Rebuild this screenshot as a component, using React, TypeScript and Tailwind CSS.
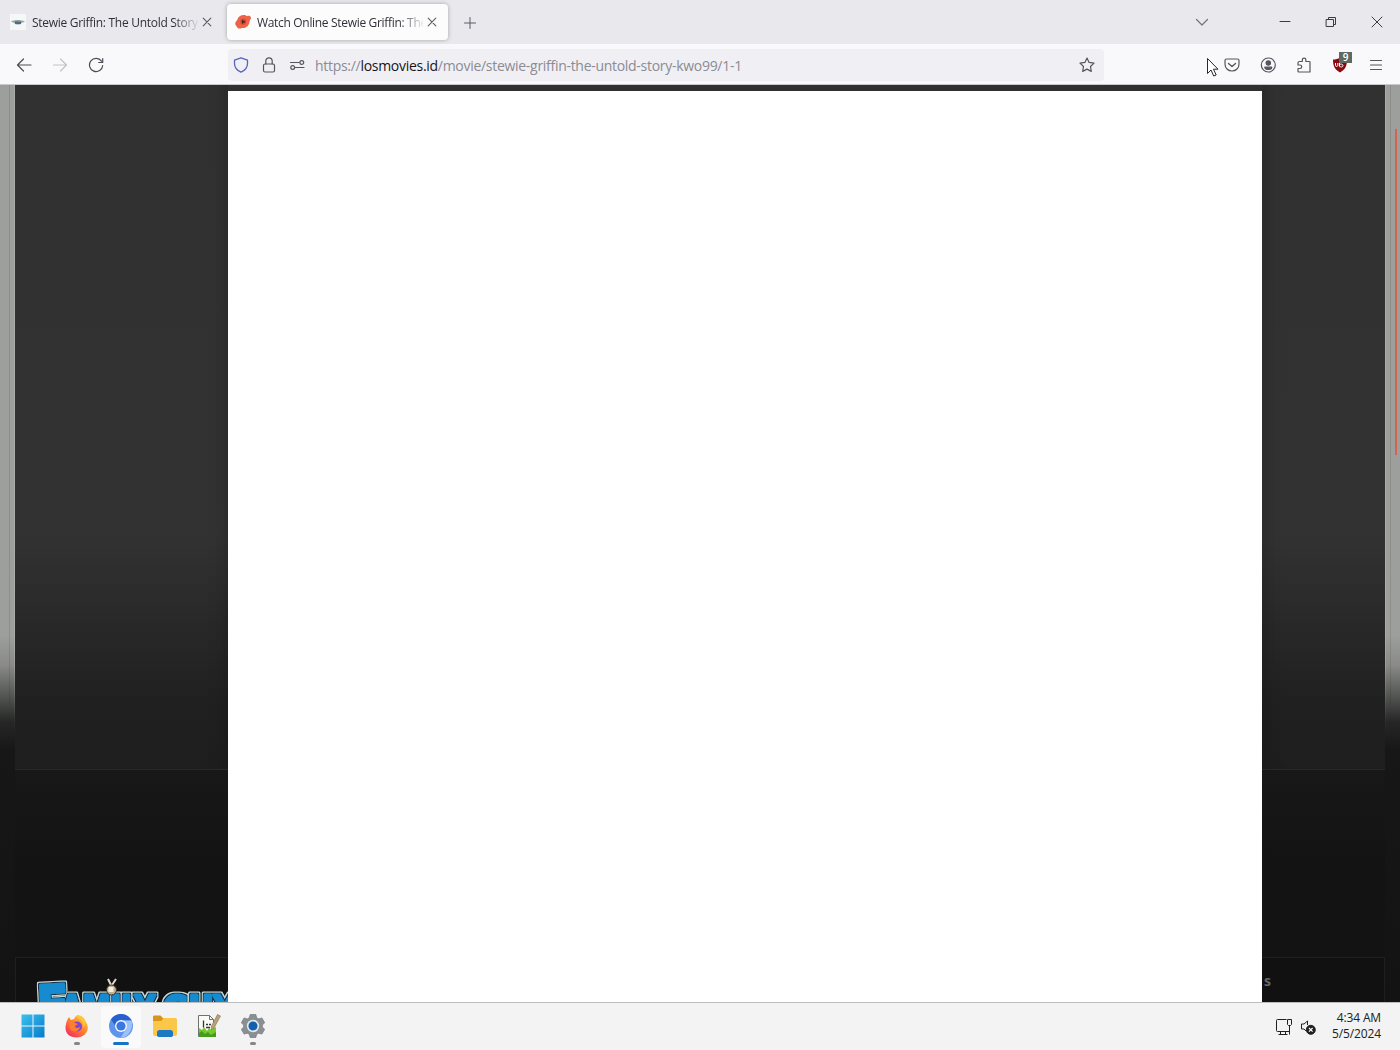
import type { ReactNode } from "react";

const TABS = [
  { title: "Stewie Griffin: The Untold Story", active: false },
  { title: "Watch Online Stewie Griffin: The", active: true },
];

function Stroke({ children, className = "" }: { children: ReactNode; className?: string }) {
  return (
    <svg
      width="16"
      height="16"
      viewBox="0 0 16 16"
      fill="none"
      stroke="currentColor"
      strokeWidth="1.2"
      strokeLinecap="round"
      strokeLinejoin="round"
      className={`shrink-0 ${className}`}
    >
      {children}
    </svg>
  );
}

function CloseIcon() {
  return (
    <Stroke className="text-[#5b5b66]">
      <path d="M4.200 4.200l7.600 7.600M11.800 4.200l-7.600 7.600" strokeWidth="1.100" />
    </Stroke>
  );
}

function UfoFavicon() {
  return (
    <svg width="16" height="16" viewBox="0 0 16 16" className="shrink-0">
      <rect width="16" height="16" fill="#f6f8f8" />
      <path d="M1 7.500c3-2 10-2 14 0-2 1.500-4 1-5 3H6C5 8.500 3 9 1 7.500z" fill="#91a9ae" />
      <path d="M5 7.500h6v2.500H5z" fill="#576a70" />
    </svg>
  );
}

function PlayFavicon() {
  return (
    <svg width="16" height="16" viewBox="0 0 16 16" className="shrink-0">
      <path d="M3 4C5 .5 10 .2 12 2.200c1.500-.8 3.500-.2 4 1.300 0 2-1.300 2.500-1.500 4.500-.5 4-4 6.500-7.500 6-1.500 1-4.500.8-5-1C1 11.500.2 11 .2 9.500.2 7.500 2.500 6.500 3 4z" fill="#ee6248" />
      <circle cx="8.200" cy="7.800" r="3" fill="#cf4935" />
      <path d="M7 5.800l3.500 2L7 9.800z" fill="#4c2420" />
    </svg>
  );
}

function Tab({ title, active }: { title: string; active: boolean }) {
  return (
    <div
      className={`flex h-9 w-[221px] items-center pl-2 pr-2 ${
        active ? "rounded bg-[#fcfcfd] shadow-[0_0_4px_rgba(0,0,0,0.3)]" : ""
      }`}
    >
      {active ? <PlayFavicon /> : <UfoFavicon />}
      <span
        className={`ml-1.5 w-[166px] overflow-hidden whitespace-nowrap pt-0.5 text-[12px] leading-4 text-[#303038] [mask-image:linear-gradient(to_right,black_142px,transparent_168px)] ${
          active ? "tracking-[-0.32px]" : "tracking-[-0.29px]"
        }`}
      >
        {title}
      </span>
      <span className="ml-auto">
        <CloseIcon />
      </span>
    </div>
  );
}

function TabBar() {
  return (
    <div className="flex h-11 items-center bg-[#e9e8ed]">
      <div className="flex gap-1 pl-0.5">
        {TABS.map((tab) => (
          <Tab key={tab.title} {...tab} />
        ))}
      </div>
      <Stroke className="ml-3.5 mt-0.5 text-[#5b5b66]">
        <path d="M8 2.500v11M2.500 8h11" strokeWidth="1" />
      </Stroke>
      <div className="ml-auto flex items-center pr-[15px] text-[#3b3b42]">
        <Stroke className="mr-[67px] text-[#73737c]">
          <path d="M2.500 5.500L8 11l5.500-5.500" />
        </Stroke>
        <Stroke className="mr-[30px]">
          <path d="M3 7.500h10" strokeWidth="1" />
        </Stroke>
        <Stroke className="mr-[30px]">
          <path d="M3.500 5.500h7v7h-7zM5.500 5.500v-2h7v7h-2" strokeWidth="1" />
        </Stroke>
        <Stroke>
          <path d="M3 3l10 10M13 3L3 13" strokeWidth="1" />
        </Stroke>
      </div>
    </div>
  );
}

function UblockIcon() {
  return (
    <div className="relative h-4 w-4">
      <svg width="16" height="16" viewBox="0 0 16 16">
        <path d="M8 .5c2 1.500 4.500 2 7 2 0 6-1.500 10-7 13-5.500-3-7-7-7-13 2.500 0 5-.5 7-2z" fill="#8b0a12" />
        <path d="M3.500 6v2.500c0 1.200 2.300 1.200 2.300 0V6M7.500 4.500v5M7.500 8c1-1.500 3.500-1 3.500.6S8.500 10.500 7.500 9" fill="none" stroke="#fff" strokeWidth="1" />
      </svg>
      <span className="absolute -right-[4px] -top-[5px] flex h-[11px] w-[13px] items-center justify-center bg-[#5f6964] text-[10px] font-semibold leading-none text-white">
        9
      </span>
    </div>
  );
}

function Toolbar() {
  return (
    <div className="flex h-[41px] items-center border-b border-[#c9c9cd] bg-[#f9f9fb] pt-px text-[#55555e]">
      <div className="flex w-[228px] items-center gap-5 pl-4">
        <Stroke className="text-[#4c4c55]">
          <path d="M15 8H1.500M7.500 2L1.500 8l6 6" />
        </Stroke>
        <Stroke className="text-[#c3c3c8]">
          <path d="M1.500 8h13M8.500 2l6 6-6 6" />
        </Stroke>
        <Stroke className="text-[#4c4c55]">
          <path d="M13.500 4.200A6.600 6.600 0 1 0 14.700 8.500M14.700 1.500v4h-4" />
        </Stroke>
      </div>
      <div className="flex h-8 w-[876px] items-center rounded bg-[#f0f0f4] pl-[5px] pr-[9px]">
        <Stroke className="text-[#5964bb]">
          <path d="M8 .8l6.500 2.400v3.300c0 4-2.500 7-6.500 8.700-4-1.700-6.500-4.700-6.500-8.700V3.200z" strokeWidth="1.300" />
        </Stroke>
        <Stroke className="ml-3">
          <rect x="2.500" y="7" width="11" height="8" rx="1.500" />
          <path d="M4.800 7V4a3.200 3.200 0 0 1 6.400 0v3" />
        </Stroke>
        <Stroke className="ml-3">
          <path d="M1.500 5.500H10M6.500 10.500H15" />
          <circle cx="12.800" cy="5.500" r="1.900" />
          <circle cx="3.700" cy="10.500" r="1.900" />
        </Stroke>
        <span className="ml-2.5 whitespace-nowrap pt-0.5 text-[14px] leading-5 tracking-[-0.29px] text-[#8b8b93]">
          https://<span className="text-[#15141a]">losmovies.id</span>/movie/stewie-griffin-the-untold-story-kwo99/1-1
        </span>
        <Stroke className="ml-auto">
          <path d="M8 1l2.100 4.400 4.900.7-3.500 3.400.8 4.900L8 12.100l-4.300 2.300.8-4.900L1 6.100l4.900-.7z" />
        </Stroke>
      </div>
      <div className="ml-auto flex items-center gap-5 pr-4">
        <Stroke>
          <path d="M1 3.500C1 2.500 1.700 2 2.500 2h11c.8 0 1.500.5 1.500 1.500V7c0 4-3 7-7 7S1 11 1 7z" />
          <path d="M4.500 6.500L8 9.500l3.500-3" strokeWidth="1.400" />
        </Stroke>
        <Stroke>
          <circle cx="8.300" cy="8" r="7" />
          <circle cx="8.300" cy="6" r="2.200" fill="currentColor" />
          <path d="M4.800 10.200h7c0 3-7 3-7 0z" fill="currentColor" />
        </Stroke>
        <Stroke>
          <path d="M2 6c0-1 .5-1.500 1.500-1.500h2.800V3a1.800 1.800 0 0 1 3.600 0v1.500h3.300c.6 0 .8.4.8.800V15H3c-.7 0-1-.4-1-1v-2.500h2a1.700 1.700 0 0 0 0-3.500H2z" />
        </Stroke>
        <UblockIcon />
        <Stroke>
          <path d="M2.500 3.500h11M2.500 8h11M2.500 12.500h11" />
        </Stroke>
      </div>
    </div>
  );
}

function FamilyGuyLogo() {
  return (
    <svg width="192" height="26" viewBox="36 976 192 26" className="block overflow-hidden">
      <defs>
        <filter id="outline" x="-10%" y="-20%" width="120%" height="140%">
          <feMorphology in="SourceAlpha" operator="dilate" radius="2" result="outer" />
          <feFlood floodColor="#c5dcd9" />
          <feComposite in2="outer" operator="in" result="pale" />
          <feMorphology in="SourceAlpha" operator="dilate" radius="1" result="inner" />
          <feFlood floodColor="#122c42" />
          <feComposite in2="inner" operator="in" result="dark" />
          <feMerge>
            <feMergeNode in="pale" />
            <feMergeNode in="dark" />
            <feMergeNode in="SourceGraphic" />
          </feMerge>
        </filter>
      </defs>
      <g
        fontFamily="'DejaVu Sans', sans-serif"
        fontWeight="bold"
        fill="#178bd0"
        stroke="#178bd0"
        strokeWidth="3"
        strokeLinejoin="round"
        filter="url(#outline)"
      >
        <text x="36" y="1026" fontSize="56" textLength="32" lengthAdjust="spacingAndGlyphs" transform="rotate(-3 40 990)">F</text>
        <text x="61" y="1021" fontSize="36" textLength="94" lengthAdjust="spacingAndGlyphs">AMILY</text>
        <text x="163" y="1021" fontSize="36" textLength="73" lengthAdjust="spacingAndGlyphs">GUY</text>
      </g>
      <path d="M108 979l3 6M116 979l-4 6" stroke="#ded8cd" strokeWidth="2" />
      <circle cx="111.500" cy="990" r="5" fill="#c0b091" stroke="#38332b" />
      <rect x="108.500" y="987" width="5" height="5" fill="#f1eee2" />
    </svg>
  );
}

function PageEdge({ mirrored = false }: { mirrored?: boolean }) {
  return (
    <div
      className={`flex h-full w-[15px] shrink-0 justify-end bg-[linear-gradient(to_bottom,#9d9f9c_0px,#9d9f9c_550px,#8a8b88_580px,#555755_610px,#252625_637px,#171717_665px,#131313_917px)] ${
        mirrored ? "-scale-x-100" : ""
      }`}
    >
      <div className="mr-1 h-[620px] w-px bg-black/10" />
      <div className="h-[650px] w-px bg-linear-to-b from-white/15 from-90% to-transparent" />
    </div>
  );
}

function PagePanel({ children, right = false }: { children: ReactNode; right?: boolean }) {
  return (
    <div className={`flex h-full flex-col ${right ? "w-[123px]" : "w-[213px]"}`}>
      <div
        className={`h-[685px] border-b border-[#292929] bg-[linear-gradient(to_bottom,#313131_0px,#323232_450px,#292929_535px,#202020_620px,#1e1e1e_684px)] ${
          right ? "shadow-[inset_18px_0_18px_-16px_rgba(0,0,0,0.2)]" : "shadow-[inset_-18px_0_18px_-16px_rgba(0,0,0,0.2)]"
        }`}
      />
      <div className="h-[187px] bg-linear-to-b from-[#181818] via-[#131313] to-[#131313]" />
      <div
        className={`h-[45px] border-t border-[#1f1f1f] bg-[#121112] ${right ? "border-r" : "border-l"}`}
      >
        {children}
      </div>
    </div>
  );
}

function WebPage() {
  return (
    <div className="relative flex h-[917px] overflow-hidden bg-[#171717]">
      <PageEdge />
      <PagePanel>
        <div className="pl-5 pt-[18px]">
          <FamilyGuyLogo />
        </div>
      </PagePanel>
      <div className="flex h-full flex-1 flex-col">
        <div className="h-1.5 shrink-0 bg-[#303030]" />
        <div className="flex-1 bg-white" />
      </div>
      <PagePanel right>
        <p className="pl-0.5 pt-[15px] text-[14px] font-bold leading-4 text-[#666]">s</p>
      </PagePanel>
      <PageEdge mirrored />
      <div className="absolute right-[3px] top-11 h-[326px] w-0.5 bg-[#d26450]" />
    </div>
  );
}

function WindowsIcon() {
  return (
    <svg width="24" height="24" viewBox="0 0 24 24">
      <defs>
        <linearGradient id="win" x1="0" y1="0" x2="1" y2="1">
          <stop stopColor="#3ac2ed" />
          <stop offset="1" stopColor="#087acb" />
        </linearGradient>
      </defs>
      <path d="M.5.500h11v11H.5zM12.500.500h11v11h-11zM.5 12.500h11v11H.5zM12.500 12.500h11v11h-11z" fill="url(#win)" />
    </svg>
  );
}

function FirefoxIcon() {
  return (
    <svg width="24" height="24" viewBox="0 0 24 24">
      <defs>
        <linearGradient id="fox" x1="1" y1="0" x2=".2" y2="1">
          <stop stopColor="#ffdf43" />
          <stop offset=".5" stopColor="#ff872c" />
          <stop offset="1" stopColor="#f12b5f" />
        </linearGradient>
      </defs>
      <path d="M4 3l2 3 3-1c1-2 2-3 4-4l2 3c3 0 6 3 7 6 3 7-3 13.500-10 13.500C3 23.500-1 18 1 10c.3-2 1-4 3-7z" fill="url(#fox)" />
      <circle cx="12" cy="12.500" r="5" fill="#8444d4" />
      <path d="M4 7c3-1 5 0 6 2l3 1-3 2c0 2 2 3 5 1-1 5-7 6-10 2z" fill="#ff7e31" />
      <path d="M13 4c4 2 6 5 5 10 5-5 2-12-5-13-2 1-2 2 0 3z" fill="#ffc438" />
    </svg>
  );
}

function ChromiumIcon() {
  return (
    <svg width="24" height="24" viewBox="0 0 24 24">
      <circle cx="12" cy="12" r="12" fill="#5e94ec" />
      <path d="M12 0c4.500 0 8.500 2.500 10.500 6.500H12L6.500 12 2 5.500C4 2.200 8 0 12 0z" fill="#2861cf" />
      <path d="M22.500 6.500C25 14 20 23.500 11.500 24L17 15l0-6-3-2.500z" fill="#9bc0fa" />
      <circle cx="12" cy="12" r="6" fill="#f4f8ff" />
      <circle cx="12" cy="12" r="4.600" fill="#3979df" />
    </svg>
  );
}

function FolderIcon() {
  return (
    <svg width="26" height="24" viewBox="0 0 26 24">
      <path d="M1 3C1 2 1.500 1.500 2.500 1.500h6l3 3H23c1 0 2 .8 2 2v3H1z" fill="#d89319" />
      <path d="M1 7h8l3-3h11c1 0 2 .8 2 2v14c0 1-.8 2-2 2H3c-1 0-2-.8-2-2z" fill="#fbc748" />
      <path d="M5 22v-3.500c0-1.500 1-2.500 2.500-2.500h11c1.500 0 2.500 1 2.500 2.500V22l-1.500 1h-13z" fill="#1d7ac2" />
    </svg>
  );
}

function NotepadIcon() {
  return (
    <svg width="24" height="24" viewBox="0 0 24 24">
      <path d="M1.500 1.500h11l4 4v17h-15z" fill="#fafaf7" stroke="#6b756d" />
      <path d="M12.500 1.500v4h4" fill="none" stroke="#6b756d" />
      <path d="M2 14l3 2 2-3 3 4 2-3 2 2 5-3v10H2z" fill="#75c929" />
      <path d="M2 19l3-2 3 3 3-2 3 3 5-3v5H2z" fill="#459b1c" />
      <path d="M6.500 6.500v7M9 10.500h2M12 10.500h2M9 13.500h4" stroke="#303a31" strokeWidth="1.300" />
      <path d="M20.500.5l3 1.500-6.500 12-3 2 .5-4z" fill="#b9a274" stroke="#857154" strokeWidth=".6" />
    </svg>
  );
}

function GearIcon() {
  return (
    <svg width="24" height="24" viewBox="0 0 24 24">
      <path
        d="M9.200.5h5.600l.9 3.300 2 1.100 3.200-1 2.800 4.900L21.300 11v2l2.400 2.300-2.800 4.800-3.200-.9-2 1.100-.9 3.200H9.200l-.9-3.200-2-1.100-3.200.9-2.800-4.800L2.700 13v-2L.3 8.800l2.800-4.900 3.200 1 2-1.100z"
        fill="#8a8f94"
        stroke="#73787c"
        strokeWidth=".7"
      />
      <circle cx="12" cy="12" r="6.200" fill="#e0e6ea" />
      <circle cx="12" cy="12" r="4.500" fill="#125fb0" />
    </svg>
  );
}

const TASKS = [
  { name: "Start", icon: <WindowsIcon />, state: "" },
  { name: "Firefox", icon: <FirefoxIcon />, state: "running" },
  { name: "Chromium", icon: <ChromiumIcon />, state: "active" },
  { name: "Files", icon: <FolderIcon />, state: "" },
  { name: "Notepad++", icon: <NotepadIcon />, state: "" },
  { name: "Settings", icon: <GearIcon />, state: "running" },
];

function Taskbar() {
  return (
    <div className="flex h-12 items-center border-t border-[#bdbdbd] bg-[#f3f3f3]">
      <div className="flex gap-1 pl-[13px]">
        {TASKS.map(({ name, icon, state }) => (
          <div
            key={name}
            aria-label={name}
            className={`flex h-[42px] w-10 flex-col items-center rounded pt-2 ${state === "active" ? "bg-[#fafafa]" : ""}`}
          >
            {icon}
            {state === "active" && <div className="mt-1 h-[3px] w-4 rounded-full bg-[#1674c6]" />}
            {state === "running" && <div className="mt-1 h-[3px] w-1.5 rounded-full bg-[#868686]" />}
          </div>
        ))}
      </div>
      <div className="ml-auto flex items-center pr-[19px] text-[#202020]">
        <svg width="18" height="18" viewBox="0 0 18 18" fill="none" stroke="currentColor" className="mr-[7px]">
          <path d="M11.500 1.500h-9c-.7 0-1 .3-1 1v10c0 .7.3 1 1 1h12V8M5.500 13.500v3M10.500 13.500v3M3.500 16.500h9" />
          <path d="M12.500 1.500h4v5l-1 1h-2l-1-1zM14.500 7.500v9" />
        </svg>
        <svg width="16" height="16" viewBox="0 0 16 16" fill="none" stroke="currentColor" className="mr-4">
          <path d="M7.500 6V2L4 5H1.500v5H4l2 2" />
          <circle cx="10.800" cy="10.800" r="4.500" fill="currentColor" />
          <path d="M9 9l3.600 3.600M12.600 9L9 12.600" stroke="#fff" strokeWidth="1.200" />
        </svg>
        <div className="pb-px text-right text-[12px] leading-4 tracking-[-0.13px]">
          <div>4:34 AM</div>
          <div>5/5/2024</div>
        </div>
      </div>
    </div>
  );
}

function Cursor() {
  return (
    <svg width="14" height="21" viewBox="0 0 14 21" className="absolute left-[1206px] top-[57px]">
      <path d="M1.500 1.500v15l3.500-3.500 2.700 6 2.500-1-2.700-5.800h4.500z" fill="#fff" stroke="#29292e" />
    </svg>
  );
}

export default function App() {
  return (
    <div className="relative flex h-[1050px] w-[1400px] flex-col overflow-hidden bg-white font-['Open_Sans','Noto_Sans',sans-serif]">
      <TabBar />
      <Toolbar />
      <WebPage />
      <Taskbar />
      <Cursor />
    </div>
  );
}
